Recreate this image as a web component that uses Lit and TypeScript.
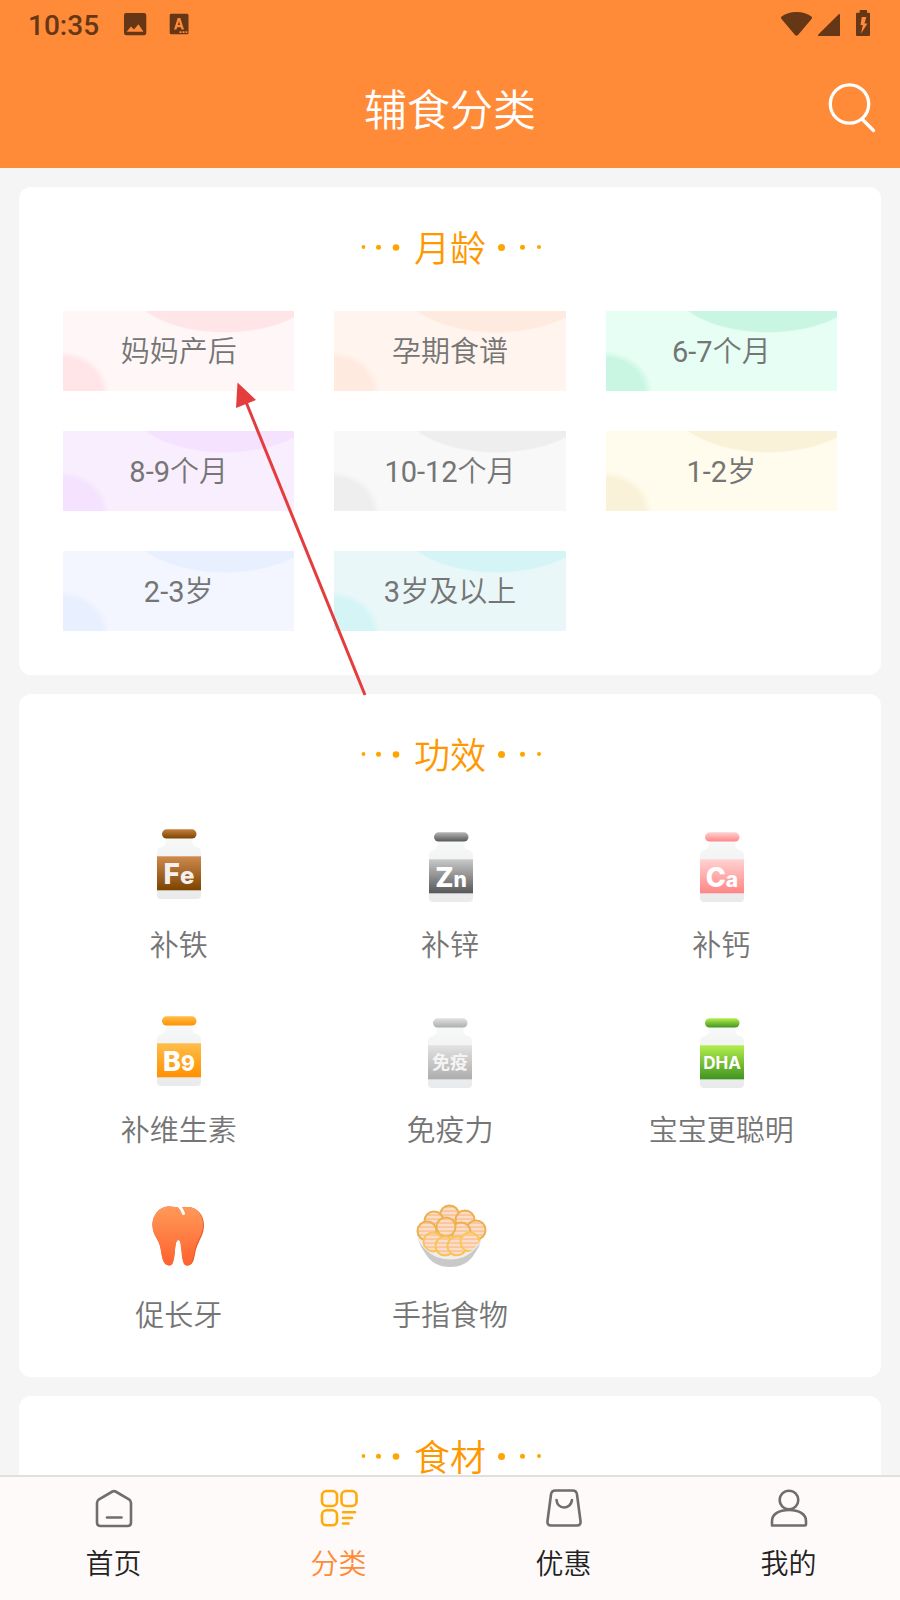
import { LitElement, html, svg, css } from "lit";
import { customElement, property } from "lit/decorators.js";

interface Age { range: string; label: string; tone: string; }
interface Effect { label: string; icon: string; }

const AGES: Age[] = [
  { range: "", label: "妈妈产后", tone: "pink" },
  { range: "", label: "孕期食谱", tone: "peach" },
  { range: "6-7", label: "个月", tone: "mint" },
  { range: "8-9", label: "个月", tone: "violet" },
  { range: "10-12", label: "个月", tone: "grey" },
  { range: "1-2", label: "岁", tone: "cream" },
  { range: "2-3", label: "岁", tone: "blue" },
  { range: "3", label: "岁及以上", tone: "aqua" },
];

const EFFECTS: Effect[] = [
  { label: "补铁", icon: "fe" },
  { label: "补锌", icon: "zn" },
  { label: "补钙", icon: "ca" },
  { label: "补维生素", icon: "b9" },
  { label: "免疫力", icon: "immune" },
  { label: "宝宝更聪明", icon: "dha" },
  { label: "促长牙", icon: "tooth" },
  { label: "手指食物", icon: "bowl" },
];

interface Jar { from: string; to: string; x: number; y: number; big: string; small: string; size: number; sub: number; capFrom?: string; ink?: string; }

const JARS: Record<string, Jar> = {
  fe: { from: "#cf8a4e", to: "#7b4300", x: -1.5, y: -3, big: "F", small: "e", size: 28, sub: 24, capFrom: "#c57f3e", ink: "#f3f1f0" },
  zn: { from: "#c9c9c9", to: "#575757", x: -0.5, y: 0, big: "Z", small: "n", size: 27, sub: 21, capFrom: "#b5b5b5" },
  ca: { from: "#ffd2d2", to: "#ff8585", x: -0.5, y: 0, big: "C", small: "a", size: 27, sub: 21 },
  b9: { from: "#ffbe4a", to: "#ff9000", x: -1.5, y: -1, big: "B", small: "9", size: 27, sub: 21 },
  immune: { from: "#e2e2e2", to: "#adadad", x: -1.5, y: 1, big: "免疫", small: "", size: 18, sub: 18, ink: "#f4f4f4" },
  dha: { from: "#b4ee4e", to: "#3f9420", x: -0.5, y: 1, big: "DHA", small: "", size: 17, sub: 17 },
};

@customElement("effect-icon")
export class EffectIcon extends LitElement {
  @property() name = "";

  static styles = css`
    :host { display: block; }
    .art { display: block; width: 100px; height: 100px; }
    .mark { font-family: Inter, "Noto Sans CJK SC", sans-serif; font-weight: 800; }
    .mark.plain { font-weight: 700; }
  `;

  private jar(j: Jar) {
    const plain = j.size < 20;
    return svg`
      <defs>
        <linearGradient id="fill" x1="0" y1="0" x2="0" y2="1">
          <stop offset="0" stop-color=${j.from}></stop><stop offset="1" stop-color=${j.to}></stop>
        </linearGradient>
        <linearGradient id="cap" x1="0" y1="0" x2="0" y2="1">
          <stop offset="0" stop-color=${j.capFrom ?? j.from}></stop><stop offset="1" stop-color=${j.to}></stop>
        </linearGradient>
        <linearGradient id="glass" x1="0" y1="0" x2="0" y2="1">
          <stop offset="0" stop-color="#f7f8f8"></stop><stop offset="1" stop-color="#e8eaec"></stop>
        </linearGradient>
      </defs>
      <g transform="translate(${j.x} ${j.y})">
        <path d="M38 23H65V27Q65 31 69 32Q73.500 33 73.500 37V80Q73.500 84 69.500 84H33.500Q29.500 84 29.500 80V37Q29.500 33 34 32Q38 31 38 27Z" fill="url(#glass)"></path>
        <rect x="34.500" y="14.300" width="34.500" height="9.300" rx="4.600" fill="url(#cap)"></rect>
        <rect x="29.500" y="41.300" width="44" height="34" fill="url(#fill)"></rect>
        <text class="mark ${plain ? "plain" : ""}" x="51.500" y=${plain ? 65 : 69} text-anchor="middle" font-size=${j.size} fill=${j.ink ?? "#fff"}>${j.big}<tspan font-size=${j.sub}>${j.small}</tspan></text>
      </g>`;
  }

  private tooth() {
    return svg`
      <defs>
        <linearGradient id="t" x1="0" y1="0" x2="0" y2="1">
          <stop offset="0" stop-color="#ff9a59"></stop><stop offset="1" stop-color="#ff612e"></stop>
        </linearGradient>
      </defs>
      <path d="M43 18.700C31 16.500 23 27 23.500 38C24 48 30 51 31.500 60C33 68 33.500 77.500 40.500 77.500C48 77.500 44 52 49.500 52C54.500 52 51 77.500 58.500 77.500C66 77.500 65 67 67.500 60C70 52 75 47 75 37C75 25 66 16.500 52.500 19.500Z" fill="#e65c2b"></path>
      <path d="M43 18.700C31 16.500 23 27 23.500 38C24 48 30 51 31.500 60C33 68 33.500 77.500 40.500 77.500C48 77.500 44 52 49.500 52C53.500 52 51 77.500 57.500 77.500C64.500 77.500 64 67 66.500 59C68.500 52 74 46 74 36.500C74 25 66 16.500 52.500 19.500Z" fill="url(#t)"></path>
      <path d="M48.500 17Q52.500 19.500 54.500 25.500" stroke="#fff" stroke-width="3" stroke-linecap="round" fill="none"></path>`;
  }

  private bowl() {
    const slices: [number, number, string][] = [
      [49.5, 27, "#eeb04c"], [34, 33, "#eeb04c"], [65, 32, "#eeb04c"],
      [27, 43, "#eeb04c"], [76, 42, "#eeb04c"], [61, 44, "#eeb04c"], [46, 39, "#efb34c"],
      [33, 54, "#f9c455"], [45, 58, "#f9c455"], [57, 58, "#f9c455"], [70, 54, "#fbc750"],
    ];
    return svg`
      <defs>
        <pattern id="stripe" width="20" height="4" patternUnits="userSpaceOnUse">
          <rect width="20" height="4" fill="#fbdcc8"></rect><rect y="2.400" width="20" height="1.400" fill="#f8c18c"></rect>
        </pattern>
        <clipPath id="rim"><path d="M0 0H100V50H82Q72 69 50 69Q28 69 17 50H0Z"></path></clipPath>
      </defs>
      <path d="M18 42Q16 53 25 65Q33 79 50 79Q67 79 75 65Q84 53 82 38Z" fill="#c9c9c9"></path>
      <path d="M16.500 42Q17 54 25 61Q35 71.500 50 71.500Q66 71.500 76 60Q86 51 84 38Z" fill="#efeeed"></path>
      <g clip-path="url(#rim)">
        ${slices.map(([x, y, c]) => svg`<ellipse cx=${x} cy=${y} rx="9.500" ry="9.500" fill="url(#stripe)" stroke=${c} stroke-width="2"></ellipse>`)}
      </g>`;
  }

  render() {
    const art = this.name === "tooth" ? this.tooth() : this.name === "bowl" ? this.bowl() : JARS[this.name] ? this.jar(JARS[this.name]) : null;
    return html`<svg class="art" viewBox="0 0 100 100" aria-hidden="true">${art}</svg>`;
  }
}

@customElement("section-title")
export class SectionTitle extends LitElement {
  static styles = css`
    :host { display: flex; align-items: center; justify-content: center; gap: 12px; height: 124px; color: #ff9800; }
    .text { margin: 0; padding-top: 2px; font-size: 36px; line-height: 52px; font-weight: inherit; }
    .dots { width: 44px; height: 10px; fill: #ffa500; }
  `;
  render() {
    return html`
      <svg class="dots" viewBox="0 0 44 10" aria-hidden="true"><circle cx="5.500" cy="3" r="1.900"></circle><circle cx="20.500" cy="3.300" r="2.500"></circle><circle cx="38" cy="3.500" r="3.300"></circle></svg>
      <h2 class="text"><slot></slot></h2>
      <svg class="dots" viewBox="0 0 44 10" aria-hidden="true"><circle cx="3.500" cy="3.500" r="3.500"></circle><circle cx="24.500" cy="3.300" r="2.500"></circle><circle cx="41" cy="3" r="2"></circle></svg>`;
  }
}

const TABS = [
  {
    label: "首页", active: false,
    icon: svg`<path d="M18.500 3.500Q20 2.700 21.500 3.500L35 11.300Q37 12.600 37 15V34.500Q37 38 33.500 38H6.500Q3 38 3 34.500V15Q3 12.600 5 11.300Z"></path><path d="M13 29.500H27.500"></path>`,
  },
  {
    label: "分类", active: true,
    icon: svg`<rect x="3" y="3" width="15" height="15" rx="4.500"></rect><rect x="22.500" y="3" width="15" height="15" rx="4.500"></rect><rect x="3" y="22.300" width="15" height="15" rx="4.500"></rect><path d="M24 24.300H36M24 30H33M24 35.500H29.500"></path>`,
  },
  {
    label: "优惠", active: false,
    icon: svg`<path d="M11.500 2.500H28.500Q32.500 2.500 33 6.500L36.500 33Q37 37.500 33 37.500H7Q3 37.500 3.500 33L7 6.500Q7.500 2.500 11.500 2.500Z"></path><path d="M12.500 12C13 16.500 16 19.500 20 19.500S27.500 16.500 28 12"></path>`,
  },
  {
    label: "我的", active: false,
    icon: svg`<circle cx="20" cy="12" r="9.300"></circle><path d="M3 37.500V33C3 26 10 22 20 22S37 26 37 33V36.500Q37 37.500 36 37.500H4Q3 37.500 3 36.500Z"></path>`,
  },
];

@customElement("app-root")
export class AppRoot extends LitElement {
  static styles = css`
    :host {
      position: relative;
      display: flex;
      flex-direction: column;
      height: 100vh;
      overflow: hidden;
      background: #f5f5f5;
      font-family: Roboto, "Noto Sans CJK SC", sans-serif;
      font-weight: 350;
      color: #757575;
    }
    a { color: inherit; text-decoration: none; }
    .top { flex: none; background: #ff8a37; }
    .status { display: flex; align-items: center; justify-content: space-between; height: 48px; padding: 0 28px; color: #663716; }
    .group { display: flex; align-items: center; }
    .clock { font-size: 28px; line-height: 34px; font-weight: 500; margin-right: 24px; padding-top: 4px; }
    .status svg { display: block; fill: currentColor; }
    .bar { display: grid; grid-template-columns: 80px 1fr 80px; align-items: center; height: 120px; }
    .heading { grid-column: 2; margin: 0; padding-top: 5px; text-align: center; color: #fff; font-size: 43px; line-height: 64px; font-weight: inherit; }
    .search { justify-self: end; width: 56px; height: 56px; margin-right: 20px; padding: 0; border: 0; background: none; color: #fff; cursor: pointer; }
    .search svg { display: block; }
    .list { flex: 1; min-height: 0; overflow: hidden; display: flex; flex-direction: column; gap: 19px; padding: 19px 19px 0; }
    .card { flex: none; background: #fff; border-radius: 12px; padding: 0 44px 44px; }
    .ages, .effects { display: grid; grid-template-columns: repeat(3, 1fr); gap: 40px; }
    .age {
      display: flex; align-items: center; justify-content: center; height: 80px; padding-top: 2px; box-sizing: border-box;
      font-size: 29px; line-height: 38px;
      background:
        radial-gradient(ellipse 98px 50px at 70% -28px, var(--blob) 97%, transparent),
        radial-gradient(ellipse 50px 40px at -4px 80px, var(--blob) 84%, transparent),
        var(--base);
    }
    .range { font-weight: 400; }
    .pink { --base: #fff6f7; --blob: #ffe4e8; }
    .peach { --base: #fff4ee; --blob: #ffeadf; }
    .mint { --base: #e6fef4; --blob: #c9f6e2; }
    .violet { --base: #f9eefd; --blob: #f4e2fe; }
    .grey { --base: #f8f8f8; --blob: #eeeeee; }
    .cream { --base: #fffced; --blob: #f9f2d9; }
    .blue { --base: #f3f5ff; --blob: #e8efff; }
    .aqua { --base: #e9f7f8; --blob: #d5f4f6; }
    .effect { display: flex; flex-direction: column; align-items: center; gap: 9px; height: 145px; font-size: 29px; line-height: 38px; }
    .tabs { flex: none; display: grid; grid-template-columns: repeat(4, 1fr); height: 123px; border-top: 2px solid #e0e0e0; background: #fffafa; }
    .tab { display: flex; flex-direction: column; align-items: center; gap: 18px; padding: 11px 0 0 2px; color: #222; font-size: 28px; line-height: 38px; }
    .tab svg { width: 40px; height: 40px; fill: none; stroke: #6e6e6e; stroke-width: 2.6; stroke-linecap: round; stroke-linejoin: round; }
    .active { color: #ff8a37; }
    .active svg { stroke: #ffaa0a; }
    .arrow { position: absolute; left: 230px; top: 380px; pointer-events: none; }
  `;

  render() {
    return html`
      <header class="top">
        <div class="status">
          <div class="group">
            <span class="clock">10:35</span>
            <svg width="68" height="24" viewBox="0 0 68 24" aria-hidden="true">
              <path fill-rule="evenodd" d="M3 1H21Q23.300 1 23.300 3.300V21Q23.300 23.300 21 23.300H3.300Q1 23.300 1 21V3.300Q1 1 3 1ZM3.700 19.800H20.500L15.500 12.300L11 17.500L8 14.500Z"></path>
              <path fill-rule="evenodd" d="M48 1.700H64Q65.500 1.700 65.500 3.200V20.700Q65.500 22.200 64 22.200H48.200Q46.700 22.200 46.700 20.700V3.200Q46.700 1.700 48 1.700ZM54.700 6L51 17.500H53.400L54.200 15.300H57.800L58.600 17.500H61L57.300 6ZM54.900 13L56 9.300L57.100 13ZM56.500 19.300V21H58.500V19.300ZM59.500 19.300V21H61.500V19.300ZM62.500 19.300V21H64.300V19.300Z"></path>
            </svg>
          </div>
          <svg width="92" height="28" viewBox="0 0 92 28" aria-hidden="true">
            <path d="M1 7Q7.500 2 16.500 2T32 7Q32.300 8 31.500 9L18 25Q16.500 26.500 15 25L1.500 9Q0.700 8 1 7Z"></path>
            <path d="M60 5V26H39.500Q37.300 26 38.300 24.500L58.500 4.500Q60 3.500 60 5Z"></path>
            <path fill-rule="evenodd" d="M79.700 0H87V2.700H89Q90 2.700 90 3.700V25Q90 26 89 26H77Q76 26 76 25V3.700Q76 2.700 77 2.700H79.700ZM81.800 7L80.500 15H82.800L81 23.500L87.500 13.500H84.500L86.300 7Z"></path>
          </svg>
        </div>
        <div class="bar">
          <h1 class="heading">辅食分类</h1>
          <button class="search" aria-label="搜索">
            <svg width="56" height="56" viewBox="0 0 56 56" fill="none" stroke="currentColor" stroke-width="3.300" stroke-linecap="round" aria-hidden="true">
              <circle cx="25.500" cy="24" r="19.200"></circle><path d="M38 39L49.500 50.500"></path>
            </svg>
          </button>
        </div>
      </header>
      <main class="list">
        <section class="card">
          <section-title>月龄</section-title>
          <div class="ages">
            ${AGES.map((a) => html`<a class="age ${a.tone}" href="#age"><span>${a.range ? html`<span class="range">${a.range}</span>` : null}${a.label}</span></a>`)}
          </div>
        </section>
        <section class="card">
          <section-title>功效</section-title>
          <div class="effects">
            ${EFFECTS.map((e) => html`<a class="effect" href="#effect"><effect-icon name=${e.icon}></effect-icon><span>${e.label}</span></a>`)}
          </div>
        </section>
        <section class="card">
          <section-title>食材</section-title>
        </section>
      </main>
      <nav class="tabs">
        ${TABS.map((t) => html`<a class="tab ${t.active ? "active" : ""}" href="#tab"><svg viewBox="0 0 40 40" aria-hidden="true">${t.icon}</svg><span>${t.label}</span></a>`)}
      </nav>
      <svg class="arrow" width="140" height="320" viewBox="0 0 140 320" aria-hidden="true">
        <path d="M16 22L135 315" stroke="#e43d3d" stroke-width="3"></path>
        <path d="M7.500 2.500L26 20L6 28Z" fill="#e43d3d"></path>
      </svg>`;
  }
}
